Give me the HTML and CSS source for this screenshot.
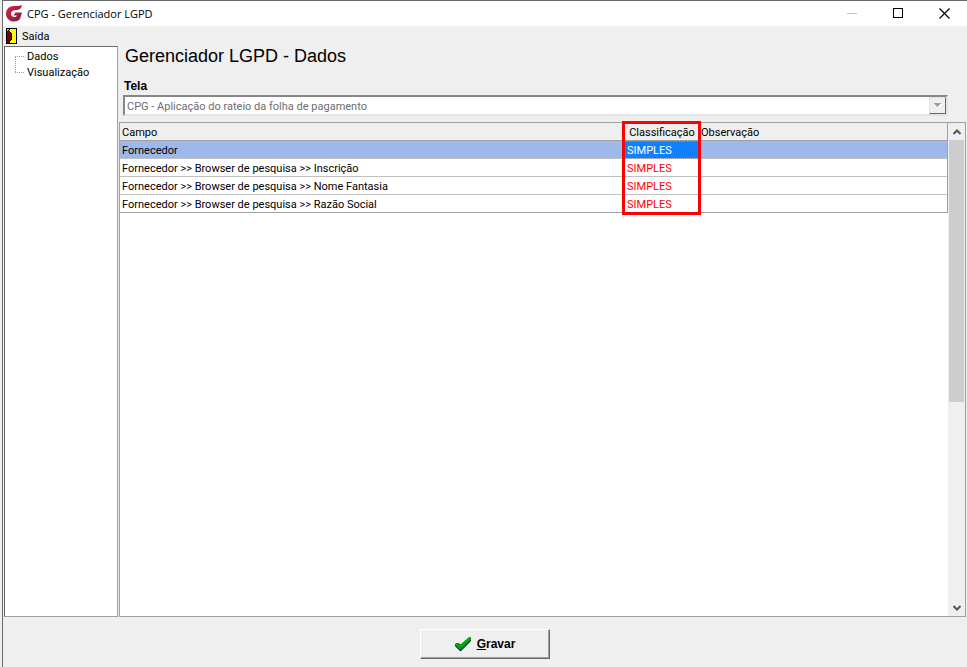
FILE: index.html
```html
<!DOCTYPE html>
<html lang="pt-BR">
<head>
    <meta charset="UTF-8">
    <meta name="viewport" content="width=device-width, initial-scale=1.0">
    <title>CPG - Gerenciador LGPD</title>
    <link rel="stylesheet" href="styles.css">
</head>
<body>
    <div class="window">
        <header class="titlebar">
            <svg class="logo" width="17" height="17" viewBox="0 0 17 17">
                <defs>
                    <linearGradient id="logoFill" x1="0" y1="0" x2="1" y2="1">
                        <stop offset="0" stop-color="#e01f3a"/>
                        <stop offset="1" stop-color="#74204a"/>
                    </linearGradient>
                </defs>
                <path fill="url(#logoFill)" d="M16 0C15.500 3.500 13.500 5 10.500 5C7.500 5 5 6.200 5 8.700C5 11 6.500 12 8.500 12C9.700 12 10.500 11.500 10.800 10.500H7.500L9.500 7.500H16L14 14C12.500 15.700 10.500 16.500 8 16.500C3.500 16.500 0 13.200 0 8.700C0 4 3.500 1 8 1C11 1 13.500 1.200 16 0Z"/>
            </svg>
            <span class="caption">CPG - Gerenciador LGPD</span>
            <button class="win-btn" aria-label="Minimizar" disabled>
                <svg width="11" height="11" viewBox="0 0 11 11"><path d="M0 5.500H10" stroke="#c4c4c4"/></svg>
            </button>
            <button class="win-btn" aria-label="Maximizar">
                <svg width="11" height="11" viewBox="0 0 11 11"><rect x="0.500" y="0.500" width="9" height="9" fill="none" stroke="#000"/></svg>
            </button>
            <button class="win-btn" aria-label="Fechar">
                <svg width="11" height="11" viewBox="0 0 11 11"><path d="M0.500 0.500L10.500 10.500M10.500 0.500L0.500 10.500" stroke="#000" stroke-width="1.200"/></svg>
            </button>
        </header>

        <nav class="menubar">
            <button class="menu-item">
                <svg width="11" height="16" viewBox="0 0 11 16" shape-rendering="crispEdges">
                    <rect width="11" height="16" fill="#000"/>
                    <rect x="4" y="1" width="6" height="14" fill="#ff0"/>
                    <path fill="#800000" d="M1 2H2V3H4V4H5V13H4V14H3V15H1Z"/>
                    <path fill="#0ff" d="M1 1H3V2H2V3H1ZM3 2H4V3H3Z"/>
                    <path fill="#000" d="M4 4H5V6H4ZM5 5H6V12H5ZM4 11H5V13H4Z"/>
                </svg>
                Saída
            </button>
        </nav>

        <main class="content">
            <aside class="sidebar">
                <ul class="tree">
                    <li>Dados</li>
                    <li>Visualização</li>
                </ul>
            </aside>

            <section class="panel">
                <h1>Gerenciador LGPD - Dados</h1>
                <label class="field-label" for="tela">Tela</label>
                <div class="combo">
                    <select id="tela" disabled>
                        <option>CPG - Aplicação do rateio da folha de pagamento</option>
                    </select>
                    <span class="combo-btn">
                        <svg width="8" height="5" viewBox="0 0 8 5" shape-rendering="crispEdges">
                            <path fill="#fff" d="M1 1H8L5 5H4Z"/>
                            <path fill="#a0a0a0" d="M0 0H7V1H6V2H5V3H4V4H3V3H2V2H1V1H0Z"/>
                        </svg>
                    </span>
                </div>

                <div class="grid">
                    <div class="grid-body">
                        <table>
                            <colgroup>
                                <col class="col-campo">
                                <col class="col-class">
                                <col>
                            </colgroup>
                            <thead>
                                <tr>
                                    <th>Campo</th>
                                    <th class="marked">Classificação<span class="highlight"></span></th>
                                    <th>Observação</th>
                                </tr>
                            </thead>
                            <tbody>
                                <tr class="selected">
                                    <td>Fornecedor</td>
                                    <td class="class-cell">SIMPLES</td>
                                    <td></td>
                                </tr>
                                <tr>
                                    <td>Fornecedor &gt;&gt; Browser de pesquisa &gt;&gt; Inscrição</td>
                                    <td class="class-cell">SIMPLES</td>
                                    <td></td>
                                </tr>
                                <tr>
                                    <td>Fornecedor &gt;&gt; Browser de pesquisa &gt;&gt; Nome Fantasia</td>
                                    <td class="class-cell">SIMPLES</td>
                                    <td></td>
                                </tr>
                                <tr>
                                    <td>Fornecedor &gt;&gt; Browser de pesquisa &gt;&gt; Razão Social</td>
                                    <td class="class-cell">SIMPLES</td>
                                    <td></td>
                                </tr>
                            </tbody>
                        </table>
                    </div>
                    <div class="scrollbar">
                        <button class="scroll-btn" aria-label="Rolar para cima">
                            <svg width="8" height="6" viewBox="0 0 8 6"><path d="M0.500 5L4 1.500L7.500 5" fill="none" stroke="#555" stroke-width="2"/></svg>
                        </button>
                        <div class="track"><div class="thumb"></div></div>
                        <button class="scroll-btn" aria-label="Rolar para baixo">
                            <svg width="8" height="6" viewBox="0 0 8 6"><path d="M0.500 1L4 4.500L7.500 1" fill="none" stroke="#555" stroke-width="2"/></svg>
                        </button>
                    </div>
                </div>
            </section>
        </main>

        <footer class="footer">
            <button class="save-btn">
                <svg width="17" height="16" viewBox="0 0 17 16">
                    <path fill="#000080" d="M0 8L3 7L6 9L15 1H16V5L6 15H5L0 10Z"/>
                    <path fill="#009800" d="M0 8L2 7L5 9L14 1H16V4L6 14H5L0 9Z"/>
                    <path fill="none" stroke="#00d000" d="M1 8L5.500 11L15.500 1"/>
                </svg>
                <span><u>G</u>ravar</span>
            </button>
        </footer>
    </div>
</body>
</html>
```
FILE: styles.css
```css
* {
    box-sizing: border-box;
}
body {
    margin: 0;
    background: #efefef;
    color: #000;
    font-family: Roboto, "Liberation Sans", Arial, sans-serif;
    font-size: 11px;
}
button, select {
    font: inherit;
    color: inherit;
    padding: 0;
    border: none;
    background: none;
}
.window {
    display: flex;
    flex-direction: column;
    min-height: 100vh;
    margin-left: 2px;
    border-top: 1px solid #696969;
    border-left: 1px solid #696969;
}

/* title bar */
.titlebar {
    display: flex;
    align-items: center;
    height: 25px;
    padding-left: 3px;
    background: #fff;
}
.caption {
    flex: 1;
    margin-left: 4px;
    font-family: "Open Sans", sans-serif;
    line-height: 14px;
}
.win-btn {
    display: flex;
    align-items: center;
    justify-content: center;
    width: 46px;
    height: 25px;
}

/* menu */
.menubar {
    display: flex;
    height: 20px;
    padding-left: 3px;
}
.menu-item {
    display: flex;
    align-items: center;
    gap: 5px;
}

.content {
    display: flex;
    flex: 1;
    gap: 1px;
    padding: 0 1px;
}
.sidebar {
    width: 114px;
    background: #fff;
    border: 1px solid #a0a0a0;
    border-top-color: #696969;
    border-left-color: #696969;
}
.tree {
    position: relative;
    list-style: none;
    margin: 0;
    padding: 1px 0 0 10px;
}
.tree li {
    display: flex;
    align-items: center;
    height: 16px;
}
.tree li::before {
    content: "";
    width: 9px;
    margin-right: 3px;
    border-top: 1px dotted #a0a0a0;
}
.tree::before {
    content: "";
    position: absolute;
    left: 10px;
    top: 9px;
    height: 16px;
    border-left: 1px dotted #a0a0a0;
}

/* right side */
.panel {
    display: flex;
    flex-direction: column;
    flex: 1;
}
h1, .field-label, .save-btn {
    font-family: "Liberation Sans", Arial, sans-serif;
}
h1 {
    margin: 0;
    padding-left: 6px;
    font-size: 18px;
    font-weight: normal;
    line-height: 20px;
}
.field-label {
    margin: 13px 0 2px 5px;
    font-size: 12px;
    font-weight: bold;
    line-height: 14px;
}
.combo {
    display: flex;
    height: 21px;
    margin: 0 18px 0 4px;
    background: #fff;
    border: 2px solid;
    border-color: #868686 #e3e3e3 #e3e3e3 #868686;
}
.combo select {
    flex: 1;
    appearance: none;
    padding: 1px 0 0 2px;
    color: #6d6d6d;
    opacity: 1;
}
.combo-btn {
    display: flex;
    align-items: center;
    justify-content: center;
    width: 17px;
    background: #efefef;
    border: 1px solid;
    border-color: #e3e3e3 #696969 #696969 #e3e3e3;
}

/* data grid */
.grid {
    display: flex;
    flex: 1;
    margin-top: 6px;
    background: #fff;
    border: 1px solid #a0a0a0;
}
.grid-body {
    flex: 1;
}
table {
    width: 100%;
    table-layout: fixed;
    border-collapse: separate;
    border-spacing: 0;
    border-right: 1px solid #a0a0a0;
}
.col-campo {
    width: 504px;
}
.col-class {
    width: 76px;
}
th, td {
    height: 18px;
    padding: 2px 2px 0;
    border-bottom: 1px solid #c0c0c0;
    line-height: 13px;
    text-align: left;
    white-space: nowrap;
}
th {
    background: #efefef;
    border-bottom-color: #a0a0a0;
    font-weight: normal;
}
th:last-child {
    padding-left: 1px;
}
tbody tr:last-child td {
    border-bottom-color: #a0a0a0;
}
.marked {
    position: relative;
    text-align: center;
}
.highlight {
    position: absolute;
    top: -2px;
    left: -2px;
    right: -1px;
    height: 94px;
    border: 3px solid #f00;
}
.class-cell {
    padding-left: 3px;
    color: #f00;
}
.selected td {
    background: #9db8ea;
}
.selected .class-cell {
    background: #1080ff;
    color: #fff;
    outline: 1px dotted #d08020;
    outline-offset: -1px;
}

.scrollbar {
    display: flex;
    flex-direction: column;
    width: 17px;
    padding: 0 1px;
    background: #efefef;
}
.scroll-btn {
    display: flex;
    align-items: center;
    justify-content: center;
    height: 17px;
}
.track {
    flex: 1;
}
.thumb {
    height: 57%;
    background: #cdcdcd;
}

/* footer */
.footer {
    display: flex;
    justify-content: center;
    height: 50px;
    padding-top: 12px;
}
.save-btn {
    display: flex;
    align-items: center;
    justify-content: center;
    gap: 5px;
    width: 130px;
    height: 30px;
    background: #efefef;
    border: 1px solid;
    border-color: #fff #696969 #696969 #fff;
    box-shadow: inset -1px -1px #a0a0a0;
    font-size: 12px;
    font-weight: bold;
}
```
